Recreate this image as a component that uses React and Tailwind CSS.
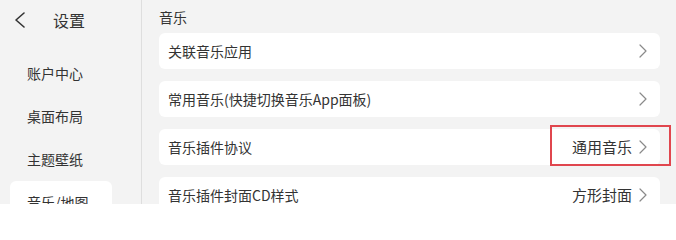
import React from "react";

const menu = ["账户中心", "桌面布局", "主题壁纸", "音乐/地图"];

const rows = [
  { label: "关联音乐应用" },
  { label: "常用音乐(快捷切换音乐App面板)" },
  { label: "音乐插件协议", value: "通用音乐" },
  { label: "音乐插件封面CD样式", value: "方形封面" },
];

function Chevron({ className }) {
  return (
    <svg viewBox="0 0 8 14" className={className} fill="none" stroke="currentColor" strokeWidth="1.2">
      <path d="M1 1l6 6-6 6" strokeLinecap="round" strokeLinejoin="round" />
    </svg>
  );
}

export default function App() {
  return (
    <div
      className="relative w-[676px] h-[204px] flex overflow-hidden bg-[#f3f3f3] text-[#333]"
      style={{ fontFamily: '"Noto Sans CJK SC", "Noto Sans", sans-serif' }}
    >
      <aside className="w-[142px] h-full shrink-0 border-r border-[#dedede] flex flex-col overflow-hidden">
        <div className="h-[40px] shrink-0 flex items-center pl-[14px]">
          <svg viewBox="0 0 12 16" className="w-[12px] h-[16px] text-[#333]" fill="none" stroke="currentColor" strokeWidth="1.6">
            <path d="M10 1L2 8l8 7" strokeLinecap="round" strokeLinejoin="round" />
          </svg>
          <span className="ml-[27px] text-[16px] leading-none">设置</span>
        </div>
        <ul className="flex flex-col pt-[12px] shrink-0">
          {menu.map((m, i) => (
            <li
              key={m}
              className={
                "ml-[10px] w-[102px] h-[43px] shrink-0 flex items-center pl-[17px] text-[14px] " +
                (i === 3 ? "bg-white rounded-[6px]" : "")
              }
            >
              {m}
            </li>
          ))}
        </ul>
      </aside>

      <main className="flex-1 h-full pl-[17px] pr-[16px] overflow-hidden">
        <div className="h-[33px] flex items-center text-[14px] leading-none pt-[1px]">音乐</div>
        <div className="flex flex-col gap-[12px]">
          {rows.map((r) => (
            <div
              key={r.label}
              className="h-[36px] shrink-0 bg-white rounded-[6px] flex items-center pl-[9px] pr-[13px] text-[14px]"
            >
              <span className="flex-1">{r.label}</span>
              {r.value && <span className="mr-[7px] text-[15px]">{r.value}</span>}
              <Chevron className="w-[8px] h-[14px] text-[#8a8a8a]" />
            </div>
          ))}
        </div>
      </main>

      <div className="absolute left-[550px] top-[125px] w-[121px] h-[41px] border-2 border-[#e0464e] pointer-events-none" />
    </div>
  );
}
